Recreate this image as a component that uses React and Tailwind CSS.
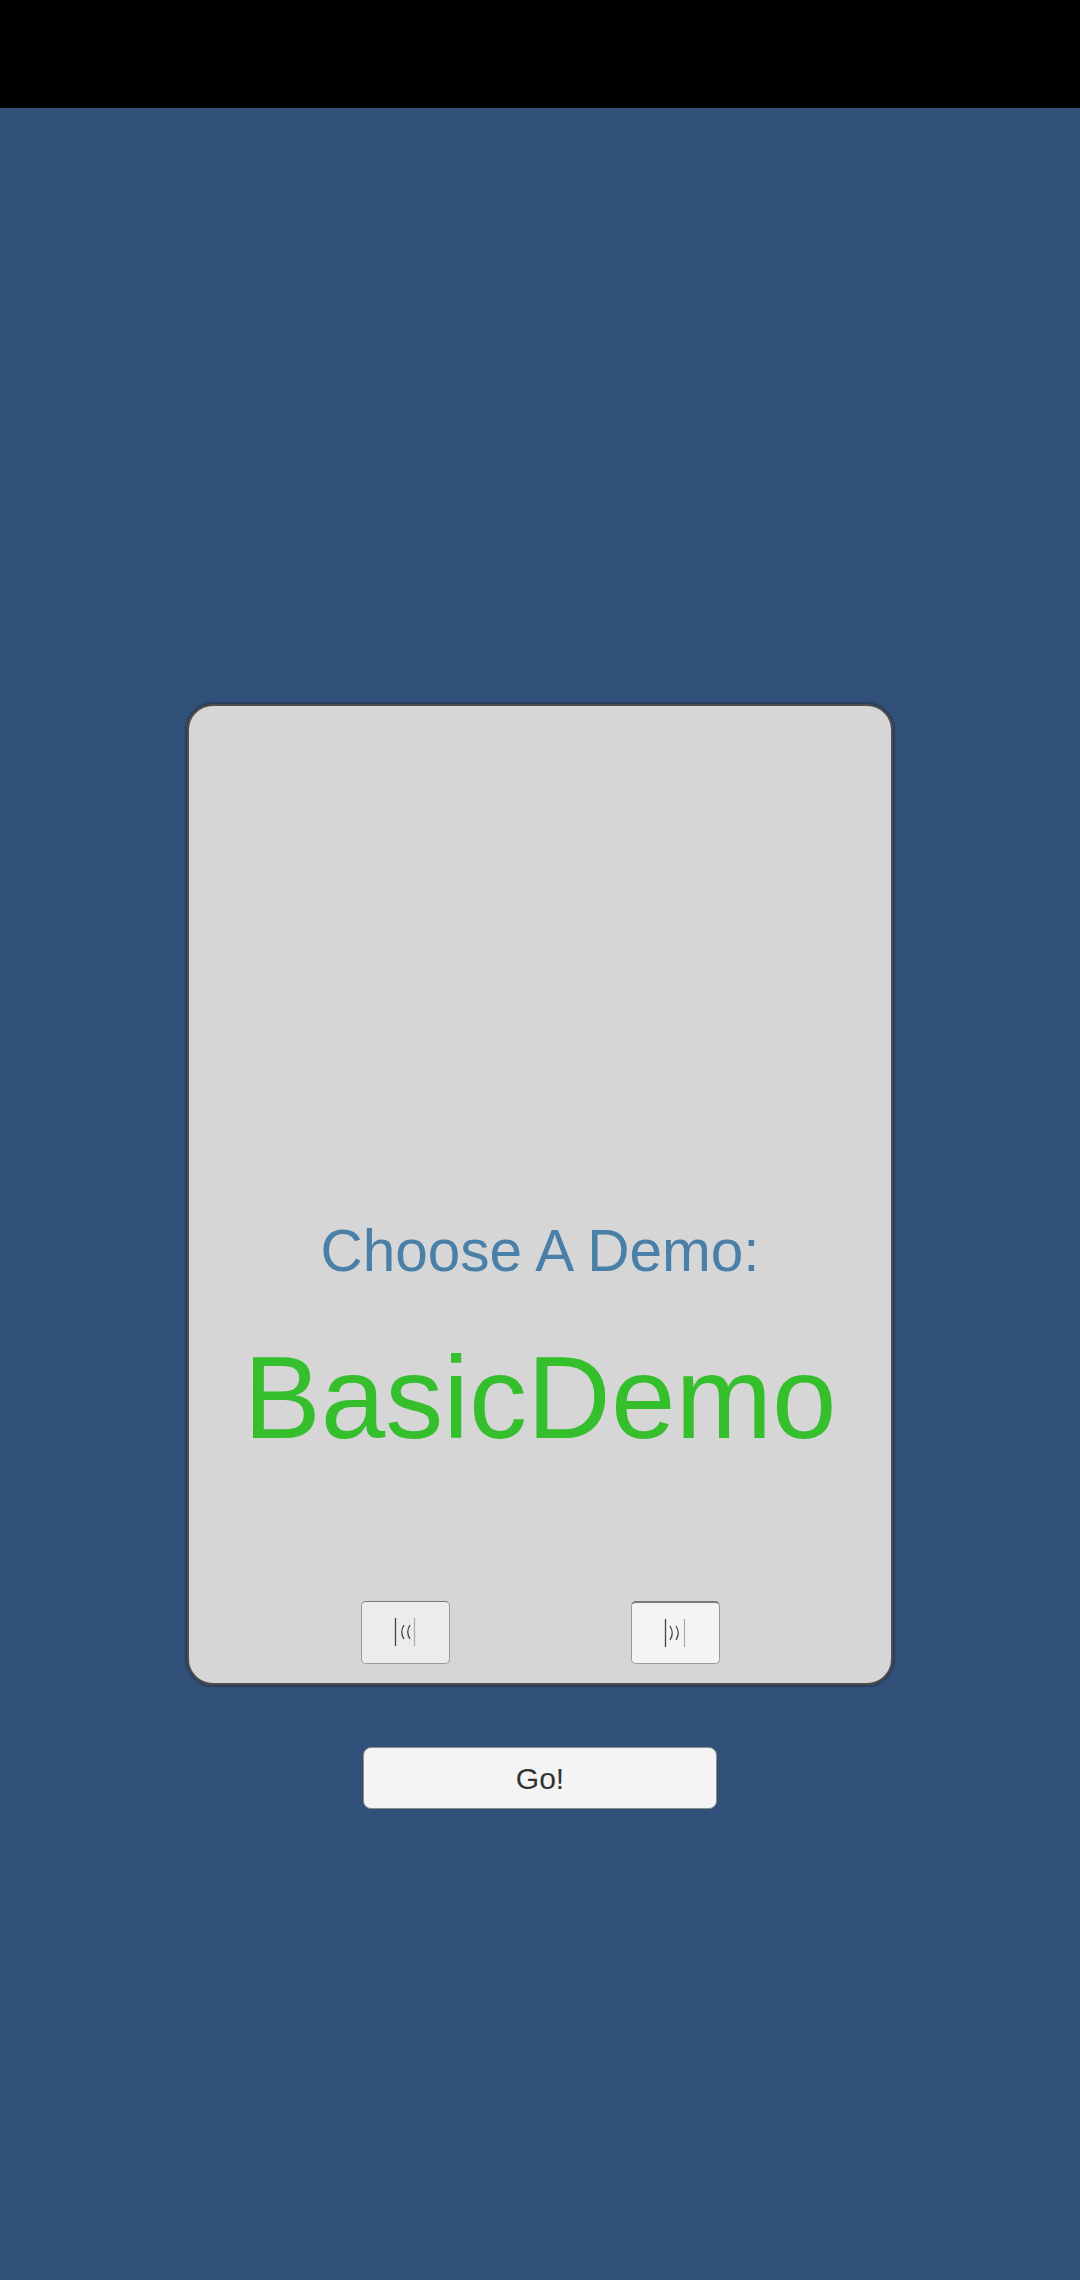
import React from "react";

function NavIcon({ dir }) {
  const left = dir === "left";
  return (
    <svg width="22" height="30" viewBox="0 0 22 30" fill="none">
      <line x1="1.5" y1="1" x2="1.5" y2="29" stroke="#444" strokeWidth="1.3" />
      <line x1="20.5" y1="1" x2="20.5" y2="29" stroke="#aaa" strokeWidth="1.2" />
      {left ? (
        <>
          <path d="M10 8 Q5.5 15 10 22" stroke="#444" strokeWidth="1.3" />
          <path d="M16 8 Q11.5 15 16 22" stroke="#444" strokeWidth="1.3" />
        </>
      ) : (
        <>
          <path d="M6 8 Q10.5 15 6 22" stroke="#444" strokeWidth="1.3" />
          <path d="M12 8 Q16.5 15 12 22" stroke="#444" strokeWidth="1.3" />
        </>
      )}
    </svg>
  );
}

export default function App() {
  return (
    <div
      className="w-[1080px] h-[2280px] flex flex-col bg-[#31507a]"
      style={{ fontFamily: '"Liberation Sans", Arial, sans-serif' }}
    >
      <div className="h-[108px] bg-black shrink-0" />
      <div className="flex flex-col items-center pt-[596px]">
        <div className="w-[706px] h-[981px] rounded-[26px] bg-[#d6d6d6] border-2 border-[#4e4e4e] shadow-[0_0_3px_1px_rgba(30,30,30,0.6)] flex flex-col items-center">
          <div className="mt-[516px] text-[58.5px] leading-none text-[#4a80a8]">
            Choose A Demo:
          </div>
          <div className="mt-[59px] text-[116px] leading-none text-[#36bf2c]">
            BasicDemo
          </div>
          <div className="mt-[145px] flex justify-center gap-[181px]">
            <div className="w-[89px] h-[63px] rounded-[5px] bg-[#ececec] border border-[#9a9a9a] border-t-[#7a7a7a] flex items-center justify-center">
              <NavIcon dir="left" />
            </div>
            <div className="w-[89px] h-[63px] rounded-[5px] bg-[#f4f4f4] border border-[#9a9a9a] border-t-[#7a7a7a] border-t-2 flex items-center justify-center">
              <NavIcon dir="right" />
            </div>
          </div>
        </div>
        <div className="mt-[62px] w-[354px] h-[62px] rounded-[8px] bg-[#f4f4f4] border border-[#8a8a8a] flex items-center justify-center text-[30px] text-[#333]">
          Go!
        </div>
      </div>
    </div>
  );
}
